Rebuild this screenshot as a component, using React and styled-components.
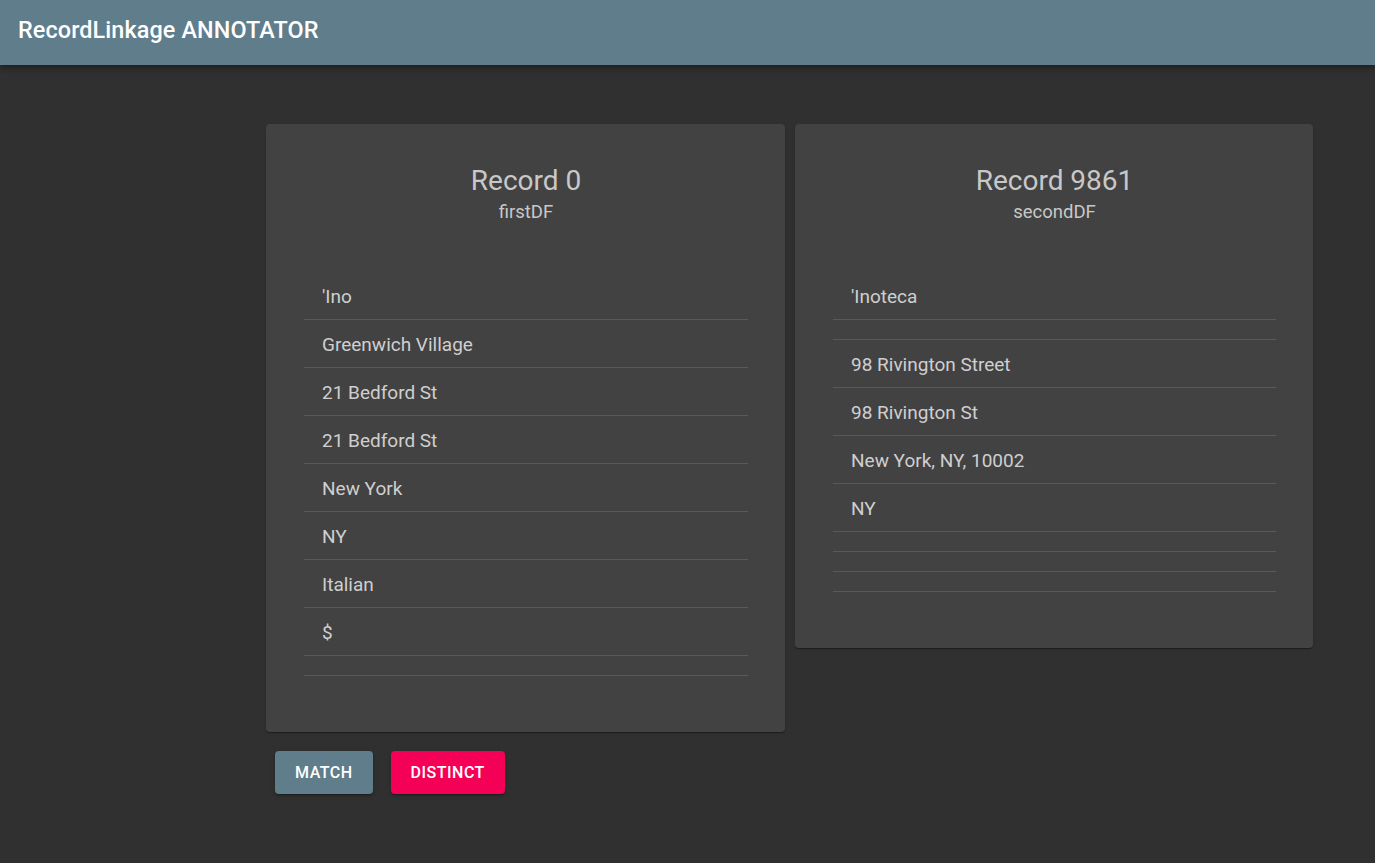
import React from "react";
import styled, { createGlobalStyle } from "styled-components";

const Global = createGlobalStyle`
  html, body { margin: 0; padding: 0; background: #303030; }
  body { font-family: Roboto, "Liberation Sans", Arial, sans-serif; color: #fff; }
  * { box-sizing: border-box; }
`;

const AppBar = styled.header`
  height: 65px;
  background: #607d8b;
  display: flex;
  align-items: center;
  padding: 0 18px 6px;
  box-shadow: 0 2px 4px -1px rgba(0,0,0,0.2), 0 4px 5px 0 rgba(0,0,0,0.14), 0 1px 10px 0 rgba(0,0,0,0.12);
`;

const Title = styled.h1`
  margin: 0;
  font-size: 23.4px;
  font-weight: 500;
  letter-spacing: 0.1px;
  color: #fff;
`;

const Main = styled.main`
  padding: 59px 0 40px 266px;
`;

const Cards = styled.div`
  display: grid;
  grid-template-columns: 519px 518px;
  gap: 10px;
  align-items: start;
`;

const Card = styled.section`
  background: #424242;
  border-radius: 4px;
  padding: 40px 37px 56px 38px;
  box-shadow: 0 2px 1px -1px rgba(0,0,0,0.2), 0 1px 1px 0 rgba(0,0,0,0.14), 0 1px 3px 0 rgba(0,0,0,0.12);
`;

const CardHead = styled.div`
  text-align: center;
  height: 108px;
  padding-top: 1px;
`;

const RecordTitle = styled.h2`
  margin: 0;
  font-size: 28px;
  font-weight: 400;
  line-height: 32px;
  color: #c8c8c8;
`;

const Source = styled.div`
  font-size: 18.5px;
  line-height: 24px;
  color: #c8c8c8;
  margin-top: 3px;
`;

const List = styled.ul`
  list-style: none;
  margin: 0;
  padding: 0;
`;

const Row = styled.li`
  padding: ${p => (p.$empty ? "0" : "12px 18px")};
  height: ${p => (p.$empty ? "20px" : "48px")};
  border-bottom: 1px solid rgba(255,255,255,0.12);
  font-size: 19px;
  line-height: 25px;
  color: #cfcfcf;
`;

const Actions = styled.div`
  display: flex;
  gap: 18px;
  margin-top: 19px;
  padding-left: 9px;
`;

const Button = styled.button`
  border: 0;
  border-radius: 4px;
  height: 43px;
  padding: 0 20px;
  font-family: Roboto, "Liberation Sans", Arial, sans-serif;
  font-size: 16px;
  font-weight: 500;
  letter-spacing: 0.5px;
  text-transform: uppercase;
  color: #fff;
  background: ${p => p.$bg};
  box-shadow: 0 3px 1px -2px rgba(0,0,0,0.2), 0 2px 2px 0 rgba(0,0,0,0.14), 0 1px 5px 0 rgba(0,0,0,0.12);
  cursor: pointer;
`;

const records = [
  {
    title: "Record 0",
    source: "firstDF",
    fields: ["'Ino", "Greenwich Village", "21 Bedford St", "21 Bedford St", "New York", "NY", "Italian", "$", ""],
  },
  {
    title: "Record 9861",
    source: "secondDF",
    fields: ["'Inoteca", "", "98 Rivington Street", "98 Rivington St", "New York, NY, 10002", "NY", "", "", ""],
  },
];

export default function App() {
  return (
    <>
      <Global />
      <AppBar>
        <Title>RecordLinkage ANNOTATOR</Title>
      </AppBar>
      <Main>
        <Cards>
          {records.map(r => (
            <Card key={r.title}>
              <CardHead>
                <RecordTitle>{r.title}</RecordTitle>
                <Source>{r.source}</Source>
              </CardHead>
              <List>
                {r.fields.map((f, i) => (
                  <Row key={i} $empty={!f}>{f}</Row>
                ))}
              </List>
            </Card>
          ))}
        </Cards>
        <Actions>
          <Button $bg="#607d8b">Match</Button>
          <Button $bg="#f50057">Distinct</Button>
        </Actions>
      </Main>
    </>
  );
}
